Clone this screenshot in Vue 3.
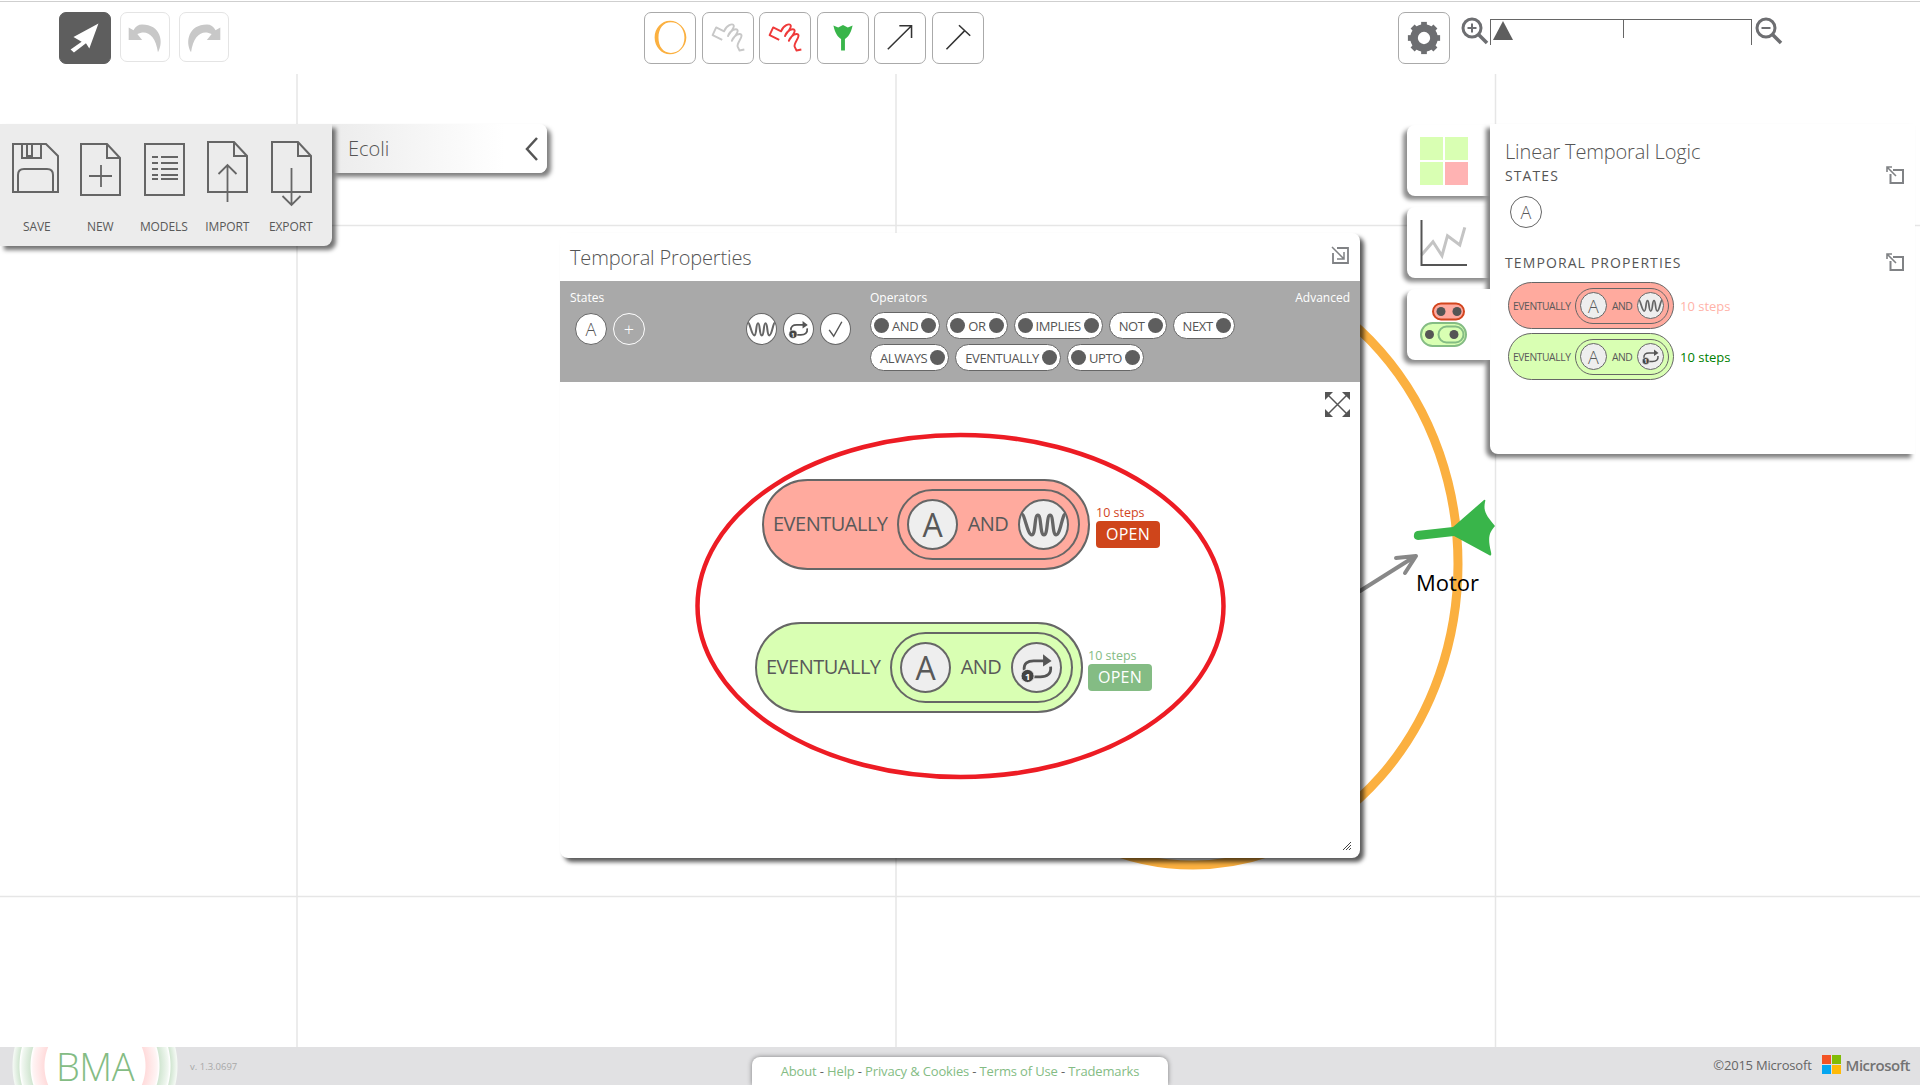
<script setup>
const fileItems = [
  { label: 'SAVE', icon: 'i-save' },
  { label: 'NEW', icon: 'i-new' },
  { label: 'MODELS', icon: 'i-models' },
  { label: 'IMPORT', icon: 'i-import' },
  { label: 'EXPORT', icon: 'i-export' }
]
const tools = ['t-ellipse', 't-coilg', 't-coilr', 't-rec', 't-arrow', 't-inhibit']
const teeth = [0, 45, 90, 135, 180, 225, 270, 315]
const ops = [
  { label: 'AND', l: true, r: true },
  { label: 'OR', l: true, r: true },
  { label: 'IMPLIES', l: true, r: true },
  { label: 'NOT', l: false, r: true },
  { label: 'NEXT', l: false, r: true },
  { label: 'ALWAYS', l: false, r: true },
  { label: 'EVENTUALLY', l: false, r: true },
  { label: 'UPTO', l: true, r: true }
]
const formulas = [
  { id: 1, cls: 'red', icon: 'i-wave' },
  { id: 2, cls: 'green', icon: 'i-loop' }
]
</script>

<template>
  <div class="page">
    <svg class="sprite" aria-hidden="true">
      <symbol id="i-wave" viewBox="0 0 50 50">
        <path d="M2 14C5 14 8 36 12.500 36C17 36 15 15 19 15C23 15 21 36 25.500 36C30 36 28 15 32 15C36 15 34 36 38.500 36C43 36 45 14 48 14" fill="none" stroke="#666" stroke-width="3.500" />
      </symbol>
      <symbol id="i-loop" viewBox="0 0 50 50">
        <path d="M12 28C11 20 16 18 22 18H33M40 24C41 32 36 35 29 35H21" fill="none" stroke="#555" stroke-width="3" />
        <path d="M32 11L41 18L32 24Z" fill="#555" />
        <circle cx="15.500" cy="34" r="7" fill="#444" stroke="#eee" />
        <text x="15.500" y="38" text-anchor="middle" class="loop-one">1</text>
      </symbol>
      <symbol id="i-check" viewBox="0 0 32 32">
        <path d="M9 17L14 24L23 8" fill="none" stroke="#555" stroke-width="1.600" />
      </symbol>
      <symbol id="i-save" viewBox="0 0 48 52">
        <path d="M2 2H35L47 14V50H2Z" fill="none" stroke="#666" stroke-width="2" />
        <path d="M11 2V16H30V2M16 2V14H21V2" fill="none" stroke="#666" stroke-width="2" />
        <path d="M7 50V33Q7 27 13 27H36Q42 27 42 33V50" fill="none" stroke="#666" stroke-width="2" />
      </symbol>
      <symbol id="i-new" viewBox="0 0 48 64">
        <path d="M5 1H31L44 15V52H5ZM31 1V15H44" fill="none" stroke="#666" stroke-width="2" />
        <path d="M25 22V44M13 33H36" fill="none" stroke="#666" stroke-width="1.800" />
      </symbol>
      <symbol id="i-models" viewBox="0 0 48 64">
        <path d="M5 1H44V52H5Z" fill="none" stroke="#666" stroke-width="2" />
        <path d="M12 14H18M21 14H38M12 20H18M21 20H38M12 26H18M21 26H38M12 32H18M21 32H38M12 36H18M21 36H38" fill="none" stroke="#666" stroke-width="1.800" />
      </symbol>
      <symbol id="i-import" viewBox="0 0 48 68">
        <path d="M5 1H31L44 15V51H5ZM31 1V15H44" fill="none" stroke="#666" stroke-width="2" />
        <path d="M24.500 61V24M15.500 33L24.500 24L33.500 33" fill="none" stroke="#666" stroke-width="1.800" />
      </symbol>
      <symbol id="i-export" viewBox="0 0 48 68">
        <path d="M5 1H31L44 15V51H5ZM31 1V15H44" fill="none" stroke="#666" stroke-width="2" />
        <path d="M24.500 27V64M15.500 55L24.500 64L33.500 55" fill="none" stroke="#666" stroke-width="1.800" />
      </symbol>
      <symbol id="t-ellipse" viewBox="0 0 52 52">
        <path fill-rule="evenodd" d="M26 8C35 8 43 16 43 25.500C43 35 35 43 26 43C17 43 10 35 10 25.500C10 16 17 8 26 8ZM27 9.500C19 9.500 14 16 14 25.500C14 35 19 41.500 27 41.500C35 41.500 41 35 41 25.500C41 16 35 9.500 27 9.500Z" fill="#fbb040" />
      </symbol>
      <symbol id="t-coil" viewBox="0 0 52 52">
        <path d="M20 28L10 23L13.700 15L22 19C24 13 31 10 32 13C33 16 27 21 26 24C28 18 35 15 36 18C37 21 31 26 30 29C32 23 39 20 40 23C41 26 35 31 36 35L38 39L43 38" fill="none" stroke="currentColor" stroke-width="2" stroke-linejoin="round" />
      </symbol>
      <symbol id="t-rec" viewBox="0 0 52 52">
        <path d="M16 13L21 15L26 12.500L31 15L36 13C34 22 31 25 28 27V39H24V27C21 25 18 22 16 13Z" fill="#39b54a" />
      </symbol>
      <symbol id="t-arrow" viewBox="0 0 52 52">
        <path d="M13.300 37.700L38 13.300M25.300 13.300H38V26" fill="none" stroke="#333" stroke-width="1.600" />
      </symbol>
      <symbol id="t-inhibit" viewBox="0 0 52 52">
        <path d="M14 37.700L33 18.300M27 12.700L38.700 23.700" fill="none" stroke="#333" stroke-width="1.600" />
      </symbol>
      <symbol id="i-pop" viewBox="0 0 18 18">
        <path d="M7 4H17V17H4.500V8" fill="none" stroke="#808285" stroke-width="2" />
        <path d="M1 1L10 10M1 6V1H6" fill="none" stroke="#808285" stroke-width="1.600" />
      </symbol>
      <symbol id="i-pop-in" viewBox="0 0 18 18">
        <path d="M6 2H17V17H2V7" fill="none" stroke="#808285" stroke-width="1.800" />
        <path d="M1 1L13 13M13 6V13H6" fill="none" stroke="#808285" stroke-width="1.500" />
      </symbol>
    </svg>

    <!-- free canvas behind the windows -->
    <svg class="canvas" width="1920" height="1047" viewBox="0 0 1920 1047">
      <path d="M297 74V1047M896 74V1047M1495.500 74V1047M0 225.500H1920M0 896.500H1920" fill="none" stroke="#e6e6e6" stroke-width="1.500" />
      <ellipse cx="1193" cy="564" rx="265" ry="301" fill="none" stroke="#fbb040" stroke-width="9" />
      <path d="M1360 591L1414 557M1396 558L1416 556L1405 573" fill="none" stroke="#888" stroke-width="4" stroke-linejoin="round" stroke-linecap="round" />
      <path d="M1417 531L1453 527L1484 500Q1486 499 1485 502C1483 512 1487 516 1495 526C1490 532 1487 536 1491 552Q1492 557 1489 555L1454 536L1418 540Q1413 539 1414 535Q1414 532 1417 531Z" fill="#39b54a" />
      <text x="1416" y="591" class="motor">Motor</text>
    </svg>

    <header class="toolbar">
      <div class="tool-left">
        <button class="tbtn active">
          <svg width="52" height="52" viewBox="0 0 52 52"><path d="M40 11L14 25L22.500 30L11 38L14.500 41L27 31.500L30.500 37Z" fill="#fff" /></svg>
        </button>
        <button class="tbtn ghost">
          <svg width="50" height="50" viewBox="0 0 50 50"><path d="M8 15V28H22L17 22C26 17 36 22 38.500 41C45 30 41 12 22 12C18 12 15 14 13 18Z" fill="#c8c8c8" /></svg>
        </button>
        <button class="tbtn ghost">
          <svg width="50" height="50" viewBox="0 0 50 50"><path d="M42 15V28H28L33 22C24 17 14 22 11.500 41C5 30 9 12 28 12C32 12 35 14 37 18Z" fill="#c8c8c8" /></svg>
        </button>
      </div>
      <div class="tool-mid">
        <button v-for="t in tools" :key="t" class="tbtn" :class="t">
          <svg width="52" height="52"><use :href="t === 't-coilg' || t === 't-coilr' ? '#t-coil' : '#' + t" /></svg>
        </button>
      </div>
      <button class="tbtn gear">
        <svg width="36" height="36" viewBox="0 0 38 38">
          <circle cx="19" cy="19" r="10.500" fill="none" stroke="#6d6e71" stroke-width="8" />
          <rect v-for="a in teeth" :key="a" x="16" y="2" width="6" height="6" fill="#6d6e71" :transform="`rotate(${a} 19 19)`" />
        </svg>
      </button>
      <div class="zoomer">
        <svg class="mag" width="28" height="28" viewBox="0 0 28 28">
          <circle cx="11" cy="11" r="9" fill="none" stroke="#6d6e71" stroke-width="3" />
          <path d="M17.500 17.500L26 26" stroke="#6d6e71" stroke-width="3.500" />
          <path d="M11 6.500V15.500M6.500 11H15.500" stroke="#6d6e71" stroke-width="2" />
        </svg>
        <div class="slider">
          <span class="tick"></span>
          <span class="thumb"></span>
        </div>
        <svg class="mag" width="28" height="28" viewBox="0 0 28 28">
          <circle cx="11" cy="11" r="9" fill="none" stroke="#6d6e71" stroke-width="3" />
          <path d="M17.500 17.500L26 26" stroke="#6d6e71" stroke-width="3.500" />
          <path d="M6.500 11H15.500" stroke="#6d6e71" stroke-width="2" />
        </svg>
      </div>
    </header>

    <section class="file-win">
      <div class="file-menu">
        <div v-for="f in fileItems" :key="f.label" class="file-item">
          <svg :class="'ico ' + f.icon" width="48" height="68"><use :href="'#' + f.icon" /></svg>
          <span>{{ f.label }}</span>
        </div>
      </div>
      <div class="model-tab">
        <span>Ecoli</span>
        <svg width="14" height="24" viewBox="0 0 14 24"><path d="M12 1L2 12L12 23" fill="none" stroke="#555" stroke-width="2.500" /></svg>
      </div>
    </section>

    <section class="ltl-win">
      <div class="tabs">
        <div class="tab">
          <div class="grid-ico"><i></i><i></i><i></i><i class="bad"></i></div>
        </div>
        <div class="tab">
          <svg width="48" height="46" viewBox="0 0 48 46">
            <path d="M1.500 35L13 21.700L22 35.700L27.500 15.700L39.800 25L44.800 7.300" fill="none" stroke="#c4c4c4" stroke-width="3" />
            <path d="M1.500 0V45H47" fill="none" stroke="#555" stroke-width="2" />
          </svg>
        </div>
        <div class="tab current">
          <svg width="48" height="46" viewBox="0 0 48 46">
            <rect x="13" y="1.500" width="31" height="16" rx="8" fill="#ffaaa0" stroke="#d2451e" stroke-width="2" />
            <circle cx="21" cy="9.500" r="4.500" fill="#555" /><circle cx="37" cy="9.500" r="4.500" fill="#555" />
            <rect x="1" y="21" width="45" height="23" rx="11.500" fill="#d9ffb3" stroke="#84bc84" stroke-width="2" />
            <rect x="18.500" y="24.500" width="25" height="16" rx="8" fill="none" stroke="#84bc84" stroke-width="2" />
            <circle cx="9.500" cy="32.500" r="4.500" fill="#555" /><circle cx="34" cy="32.500" r="4.500" fill="#555" />
          </svg>
        </div>
      </div>
      <div class="ltl-panel">
        <h2>Linear Temporal Logic</h2>
        <div class="sec-head">
          <h3>STATES</h3>
          <svg width="18" height="18"><use href="#i-pop" /></svg>
        </div>
        <div class="state-a">A</div>
        <div class="sec-head second">
          <h3>TEMPORAL PROPERTIES</h3>
          <svg width="18" height="18"><use href="#i-pop" /></svg>
        </div>
        <div v-for="f in formulas" :key="f.id" class="mini-row">
          <div class="formula small" :class="f.cls">
            <span class="word">EVENTUALLY</span>
            <div class="inner">
              <span class="disc">A</span>
              <span class="and">AND</span>
              <span class="disc"><svg width="100%" height="100%"><use :href="'#' + f.icon" /></svg></span>
            </div>
          </div>
          <span class="mini-steps" :class="f.cls">10 steps</span>
        </div>
      </div>
    </section>

    <section class="dialog">
      <div class="dlg-head">
        <h2>Temporal Properties</h2>
        <svg class="flip" width="18" height="18"><use href="#i-pop-in" /></svg>
      </div>
      <div class="band">
        <div class="b-states">
          <div class="b-title">States</div>
          <div class="b-row">
            <span class="chip">A</span>
            <span class="chip add">+</span>
          </div>
        </div>
        <div class="b-icons">
          <span class="chip"><svg width="100%" height="100%"><use href="#i-wave" /></svg></span>
          <span class="chip"><svg width="100%" height="100%"><use href="#i-loop" /></svg></span>
          <span class="chip"><svg width="100%" height="100%"><use href="#i-check" /></svg></span>
        </div>
        <div class="b-ops">
          <div class="b-title">Operators</div>
          <div class="op-wrap">
            <span v-for="o in ops" :key="o.label" class="op">
              <i v-if="o.l" class="dot"></i>
              <b :class="{ pad: !o.l }">{{ o.label }}</b>
              <i v-if="o.r" class="dot"></i>
            </span>
          </div>
        </div>
        <div class="b-title b-adv">Advanced</div>
      </div>
      <div class="dlg-body">
        <svg class="fs" width="27" height="27" viewBox="0 0 27 27">
          <path d="M4 4L23 23M23 4L4 23" stroke="#555" stroke-width="1.500" />
          <path d="M1 1H9L1 9ZM26 1H18L26 9ZM1 26H9L1 18ZM26 26H18L26 18Z" fill="#555" />
        </svg>
        <div v-for="f in formulas" :key="f.id" class="result" :class="'r' + f.id">
          <div class="formula big" :class="f.cls">
            <span class="word">EVENTUALLY</span>
            <div class="inner">
              <span class="disc">A</span>
              <span class="and">AND</span>
              <span class="disc"><svg width="100%" height="100%"><use :href="'#' + f.icon" /></svg></span>
            </div>
          </div>
          <div class="verdict" :class="f.cls">
            <span>10 steps</span>
            <button>OPEN</button>
          </div>
        </div>
        <svg class="ring" width="542" height="356" viewBox="0 0 542 356">
          <ellipse cx="270.500" cy="178" rx="263" ry="171" fill="none" stroke="#ed1c24" stroke-width="4.500" />
        </svg>
        <svg class="grip" width="8" height="8" viewBox="0 0 8 8">
          <path d="M0 8L8 0M3 8L8 3M6 8L8 6" stroke="#444" stroke-width="1" />
        </svg>
      </div>
    </section>

    <footer class="foot">
      <div class="foot-left">
        <div class="logo"><span>BMA</span></div>
        <span class="ver">v. 1.3.0697</span>
      </div>
      <nav class="links">
        <a>About</a> - <a>Help</a> - <a>Privacy &amp; Cookies</a> - <a>Terms of Use</a> - <a>Trademarks</a>
      </nav>
      <div class="foot-right">
        <span class="copy">©2015 Microsoft</span>
        <svg width="19" height="19" viewBox="0 0 19 19">
          <rect width="9" height="9" fill="#f35325" /><rect x="10" width="9" height="9" fill="#81bc06" />
          <rect y="10" width="9" height="9" fill="#05a6f0" /><rect x="10" y="10" width="9" height="9" fill="#ffba08" />
        </svg>
        <span class="ms">Microsoft</span>
      </div>
    </footer>
  </div>
</template>

<style>
html, body { margin: 0; background: #fff; overflow: hidden; }
</style>

<style scoped>
.page {
  position: relative;
  width: 1920px;
  height: 1085px;
  overflow: hidden;
  display: flex;
  flex-direction: column;
  font-family: "Open Sans", "Noto Sans", sans-serif;
  color: #595959;
  background: #fff;
}
.sprite { position: absolute; width: 0; height: 0; }
.loop-one { font: 700 10px "Open Sans", sans-serif; fill: #fff; }
.canvas { position: absolute; left: 0; top: 0; }
.motor { font: 400 22px "Open Sans", sans-serif; fill: #000; }

/* toolbar */
.toolbar {
  position: relative;
  height: 73px;
  margin-top: 1px;
  border-top: 1px solid #cfcfcf;
  display: flex;
  align-items: flex-start;
  padding-top: 10px;
  box-sizing: border-box;
  flex: none;
}
.tbtn {
  box-sizing: border-box;
  width: 52px;
  height: 52px;
  padding: 0;
  border: 1px solid #aaa;
  border-radius: 7px;
  background: #fff;
  display: flex;
  align-items: center;
  justify-content: center;
}
.tool-left { display: flex; gap: 9px; margin-left: 59px; }
.tbtn.active { background: #5e5e5e; border-color: #5e5e5e; }
.tbtn.ghost { width: 50px; height: 50px; border-color: #e4e4e4; }
.tool-mid { display: flex; gap: 5.600px; margin-left: 415px; }
.t-coilg { color: #c8c8c8; }
.t-coilr { color: #ef3a3a; }
.gear { width: 52px; margin-left: 414px; }
.zoomer { display: flex; align-items: flex-start; margin-left: 11px; margin-top: 5px; }
.mag { flex: none; }
.slider {
  position: relative;
  box-sizing: border-box;
  width: 262px;
  height: 26px;
  margin: 2px 3px 0 1px;
  border: 1px solid #666;
  border-bottom: 0;
}
.tick { position: absolute; left: 132px; top: 0; width: 1px; height: 18px; background: #666; }
.thumb {
  position: absolute; left: 2px; top: 1px; width: 0; height: 0;
  border-left: 10px solid transparent;
  border-right: 10px solid transparent;
  border-bottom: 19px solid #5e5e5e;
}

/* file window */
.file-win { position: absolute; left: 0; top: 124px; display: flex; align-items: flex-start; }
.file-menu {
  box-sizing: border-box;
  width: 332px;
  height: 122px;
  background: #ececec;
  border-radius: 0 0 8px 0;
  box-shadow: 4px 4px 4px rgba(0, 0, 0, .55);
  display: flex;
  padding: 17px 0 0 5px;
  position: relative;
  z-index: 1;
}
.file-item { width: 63.500px; position: relative; display: flex; flex-direction: column; align-items: center; height: 100px; }
.file-item svg { flex: none; }
.file-item span { position: absolute; top: 77px; left: 0; right: 0; text-align: center; font-size: 12px; line-height: 18px; letter-spacing: -.1px; }
.i-save { margin: -7px 0 0 -3px; }
.model-tab {
  box-sizing: border-box;
  width: 215px;
  height: 49px;
  padding: 0 8px 0 16px;
  display: flex;
  align-items: center;
  justify-content: space-between;
  background: linear-gradient(90deg, #ececec, #fff 80%);
  border-radius: 0 8px 8px 0;
  box-shadow: 4px 4px 4px rgba(0, 0, 0, .5);
  font-size: 20px;
  font-weight: 300;
  color: #555;
}

/* right window */
.ltl-win { position: absolute; left: 1407px; top: 124px; display: flex; align-items: flex-start; }
.tabs { width: 83px; display: flex; flex-direction: column; gap: 11px; padding-top: 1px; flex: none; }
.tab {
  height: 71px;
  background: #fff;
  border-radius: 8px 0 0 8px;
  box-shadow: -4px 4px 4px rgba(0, 0, 0, .45);
  display: flex;
  align-items: center;
  padding-left: 13px;
  box-sizing: border-box;
}
.tab.current { position: relative; z-index: 3; }
.grid-ico { display: grid; grid-template-columns: 23px 23px; grid-auto-rows: 23px; gap: 2px; }
.grid-ico i { background: #d9ffb3; }
.grid-ico i.bad { background: #ffb3b3; }
.ltl-panel {
  position: relative;
  z-index: 2;
  box-sizing: border-box;
  width: 425px;
  height: 330px;
  padding: 15px 11px 0 15px;
  background: #fff;
  border-radius: 0 0 0 8px;
  box-shadow: -4px 4px 4px rgba(0, 0, 0, .5);
}
.ltl-panel h2 { margin: 0; font-size: 20px; font-weight: 300; line-height: 26px; color: #555; letter-spacing: -.15px; }
.sec-head { display: flex; align-items: center; justify-content: space-between; height: 18px; margin-top: 1px; padding-right: 0; }
.sec-head.second { margin-top: 25px; }
.sec-head h3 { margin: 0; font-size: 14px; font-weight: 400; letter-spacing: 1.100px; color: #555; }
.state-a {
  box-sizing: border-box;
  width: 32px; height: 32px;
  margin: 12px 0 0 5px;
  border: 1px solid #666;
  border-radius: 50%;
  display: flex; align-items: center; justify-content: center;
  font-size: 18px; font-weight: 300;
}
.mini-row { display: flex; align-items: center; margin: 0 0 4px 3px; }
.sec-head.second + .mini-row { margin-top: 11px; }
.mini-steps { margin-left: 6px; font-size: 13px; letter-spacing: 0; }
.mini-steps.red { color: #ffb3a8; }
.mini-steps.green { color: #008000; }

/* formula pill */
.formula { box-sizing: border-box; display: flex; align-items: center; border-style: solid; border-color: #666; flex: none; }
.formula.red { background: #ffaa9e; }
.formula.green { background: #d9ffb3; }
.inner { box-sizing: border-box; display: flex; align-items: center; justify-content: space-between; border-style: solid; border-color: #666; margin-left: auto; }
.disc { box-sizing: border-box; display: flex; align-items: center; justify-content: center; border-style: solid; border-color: #666; border-radius: 50%; background: #eee; flex: none; }
.word, .and { letter-spacing: -.5px; }
.big { width: 328px; height: 91px; border-width: 2px; border-radius: 46px; padding-left: 9px; }
.big .word { font-size: 20px; padding-bottom: 3px; }
.big .inner { width: 183px; height: 71px; border-width: 2px; border-radius: 36px; margin-right: 8px; padding: 0 9px 0 8px; }
.big .disc { width: 51px; height: 51px; border-width: 2px; font-size: 32px; font-weight: 400; }
.big .and { font-size: 20px; padding-bottom: 3px; }
.small { width: 166px; height: 47px; border-width: 1px; border-radius: 24px; padding-left: 4px; }
.small .word { font-size: 10.300px; letter-spacing: -.4px; }
.small .inner { width: 94px; height: 36px; border-width: 1px; border-radius: 18px; margin-right: 4px; padding: 0 4px; }
.small .disc { width: 27px; height: 27px; border-width: 1px; font-size: 18px; font-weight: 300; }
.small .and { font-size: 10.300px; }

/* dialog */
.dialog {
  position: absolute;
  left: 560px;
  top: 233px;
  width: 800px;
  height: 625px;
  background: #fff;
  border-radius: 8px;
  box-shadow: 4px 4px 4px rgba(0, 0, 0, .65);
  display: flex;
  flex-direction: column;
  z-index: 5;
}
.dlg-head { height: 48px; box-sizing: border-box; flex: none; display: flex; align-items: center; justify-content: space-between; padding: 0 11px 0 10px; }
.dlg-head h2 { margin: 0; font-size: 20px; font-weight: 300; color: #555; letter-spacing: -.15px; }
.flip { margin-top: -4px; }
.band {
  height: 101px;
  flex: none;
  box-sizing: border-box;
  background: #a9a9a9;
  display: flex;
  padding: 8px 10px 0;
  color: #fff;
}
.b-title { font-size: 12px; line-height: 17px; color: #fff; letter-spacing: 0; }
.b-states { width: 176px; flex: none; }
.b-row { display: flex; gap: 6px; padding-left: 5px; margin-top: 7px; }
.chip {
  box-sizing: border-box;
  width: 32px; height: 32px;
  border: 1px solid #666;
  border-radius: 50%;
  background: #fff;
  display: flex; align-items: center; justify-content: center;
  font-size: 18px; font-weight: 300; color: #555;
  flex: none;
}
.chip.add { background: transparent; border-color: #fff; color: #fff; font-size: 18px; }
.b-icons { width: 124px; flex: none; display: flex; gap: 6px; padding-top: 24px; box-sizing: border-box; height: 56px; }
.b-icons .chip { width: 31px; }
.b-ops { width: 370px; flex: none; }
.op-wrap { display: flex; flex-wrap: wrap; gap: 5px 6px; margin-top: 6px; }
.op {
  box-sizing: border-box;
  height: 27px;
  padding: 0 3px;
  border: 1px solid #666;
  border-radius: 14px;
  background: #fff;
  display: inline-flex; align-items: center; gap: 3px;
}
.op b { font-weight: 400; font-size: 13px; letter-spacing: -.4px; color: #555; }
.op b.pad { padding-left: 6px; }
.dot { width: 15px; height: 15px; border-radius: 50%; background: #5e5e5e; flex: none; }
.b-adv { margin-left: auto; }
.dlg-body { position: relative; flex: 1; min-height: 0; }
.fs { position: absolute; right: 9px; top: 9px; }
.ring { position: absolute; left: 130px; top: 46px; pointer-events: none; }
.grip { position: absolute; right: 9px; bottom: 8px; }
.result { display: flex; align-items: center; }
.r1 { margin: 97px 0 0 202px; }
.r2 { margin: 52px 0 0 195px; }
.verdict { display: flex; flex-direction: column; margin: 0 0 0 5px; padding-top: 2px; align-items: flex-start; }
.verdict.red { margin-left: 6px; }
.verdict span { font-size: 12.500px; line-height: 17px; }
.verdict button {
  width: 64px; height: 27px; border: 0; border-radius: 4px; padding: 0;
  font: 400 16px "Open Sans", sans-serif; color: #fff; letter-spacing: .3px;
}
.verdict.red span { color: #d2451e; }
.verdict.red button { background: #cf451b; }
.verdict.green span { color: #84bc84; }
.verdict.green button { background: #84bc84; }

/* footer */
.foot {
  position: relative;
  margin-top: auto;
  height: 38px;
  flex: none;
  background: #e1e1e3;
  display: grid;
  grid-template-columns: 1fr 416px 1fr;
  z-index: 6;
}
.foot-left { display: flex; align-items: center; }
.logo {
  box-sizing: border-box;
  width: 166px;
  height: 38px;
  margin-left: 12px;
  display: flex; align-items: center; justify-content: center;
  background: radial-gradient(circle 83px at 83px 19px,
    #fff 0 50px, #ffdcdc 51px, #fff4f4 62px, #fff 64px, #d2e6d2 65px, #f0f7f0 73px, #fff 75px, #d2e6d2 76px, #f4f9f4 82px, rgba(255,255,255,0) 83px);
}
.logo span { font-size: 38px; font-weight: 300; color: #84bc84; line-height: 38px; letter-spacing: -.5px; }
.ver { margin-left: 12px; font-size: 9.500px; color: #a8a8a8; }
.links {
  box-sizing: border-box;
  height: 28px;
  margin-top: 10px;
  background: #fff;
  border-radius: 8px 8px 0 0;
  box-shadow: 0 0 5px rgba(0, 0, 0, .45);
  text-align: center;
  font-size: 13px;
  line-height: 29px;
  letter-spacing: -.15px;
  color: #666;
}
.links a { color: #84bc84; }
.foot-right { display: flex; align-items: center; justify-content: flex-end; padding: 0 10px 3px 0; gap: 8px; }
.copy { font-size: 13px; color: #666; letter-spacing: -.2px; margin-right: 2px; }
.ms { font-size: 15px; font-weight: 600; color: #737373; letter-spacing: -.5px; margin-left: -3px; }
</style>
